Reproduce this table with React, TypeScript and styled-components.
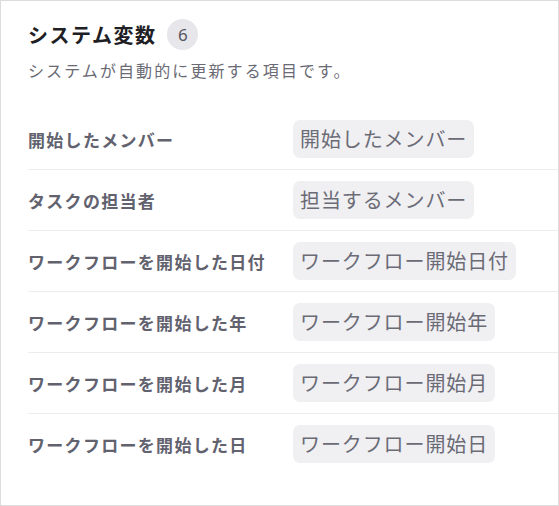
import React from 'react';
import styled, { createGlobalStyle } from 'styled-components';

const GlobalStyle = createGlobalStyle`
  body {
    margin: 0;
    font-family: "Noto Sans CJK JP", "Noto Sans", sans-serif;
    background: #fff;
  }
`;

const Frame = styled.div`
  width: 559px;
  height: 506px;
  box-sizing: border-box;
  border: 1px solid #dcdcdc;
  overflow: hidden;
  padding: 18px 0 0 27px;
`;

const Header = styled.div`
  display: flex;
  align-items: center;
  gap: 11px;
`;

const Title = styled.h2`
  margin: 0;
  font-size: 20px;
  line-height: 30px;
  font-weight: 700;
  letter-spacing: 1.5px;
  color: #202024;
`;

const Badge = styled.span`
  display: inline-flex;
  align-items: center;
  justify-content: center;
  width: 31px;
  height: 31px;
  border-radius: 50%;
  background: #e6e6eb;
  color: #55555f;
  font-family: "Noto Sans", sans-serif;
  font-size: 17px;
`;

const Subtitle = styled.p`
  margin: 8px 0 0;
  font-size: 16px;
  line-height: 24px;
  letter-spacing: 2.1px;
  color: #6a6a74;
`;

const List = styled.div`
  margin-top: 27px;
`;

const Row = styled.div<{ $last?: boolean }>`
  display: grid;
  grid-template-columns: 265px auto;
  align-items: center;
  height: 60px;
  border-bottom: ${p => (p.$last ? 'none' : '1px solid #ededf0')};
`;

const Label = styled.div`
  font-size: 17px;
  font-weight: 700;
  letter-spacing: 1.3px;
  color: #62626f;
`;

const Pill = styled.span`
  justify-self: start;
  padding: 5px 7px;
  border-radius: 7px;
  background: #f0f0f3;
  font-size: 20px;
  line-height: 28px;
  letter-spacing: 0.9px;
  color: #6b6b76;
  white-space: nowrap;
`;

const rows = [
  ['開始したメンバー', '開始したメンバー'],
  ['タスクの担当者', '担当するメンバー'],
  ['ワークフローを開始した日付', 'ワークフロー開始日付'],
  ['ワークフローを開始した年', 'ワークフロー開始年'],
  ['ワークフローを開始した月', 'ワークフロー開始月'],
  ['ワークフローを開始した日', 'ワークフロー開始日'],
];

export default function App() {
  return (
    <>
      <GlobalStyle />
      <Frame>
        <Header>
          <Title>システム変数</Title>
          <Badge>{rows.length}</Badge>
        </Header>
        <Subtitle>システムが自動的に更新する項目です。</Subtitle>
        <List>
          {rows.map(([label, value], i) => (
            <Row key={label} $last={i === rows.length - 1}>
              <Label>{label}</Label>
              <Pill>{value}</Pill>
            </Row>
          ))}
        </List>
      </Frame>
    </>
  );
}
